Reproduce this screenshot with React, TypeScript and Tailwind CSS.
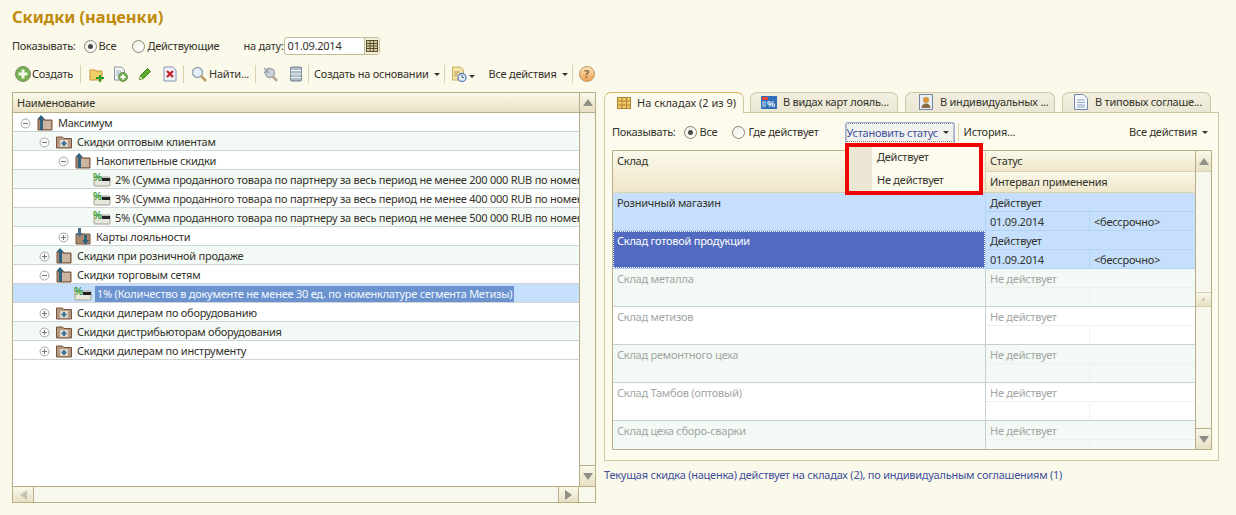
import React from 'react'

const FolderUp = () => (
  <svg width="18" height="18" viewBox="0 0 18 18">
    <path d="M2 5h6l1 1h7v10H2z" fill="#a98a70" stroke="#7a5238" />
    <path d="M4 7h11v8H4z" fill="#c9b5a2" />
    <path d="M5 1 1.5 5H4v11h3V5h1.800z" fill="#2f6480" />
  </svg>
)

const FolderPlus = () => (
  <svg width="18" height="18" viewBox="0 0 18 18">
    <path d="M1.500 4h6l1.500 1.500h7.500V15H1.500z" fill="#b39a84" stroke="#7a5238" />
    <rect x="5" y="7" width="8" height="7" fill="#e2d7cb" />
    <path d="M8 8h2v1.500h1.500v2H10V13H8v-1.500H6.500v-2H8z" fill="#3a6f96" />
  </svg>
)

const FolderDown = () => (
  <svg width="18" height="18" viewBox="0 0 18 18">
    <path d="M2 6h14v10H2z" fill="#a98a70" stroke="#7a5238" />
    <path d="M4 0h3v5h2L5.500 9 2 5h2z" fill="#4d7088" />
    <path d="M10 7h3v5h2l-3.500 5L8 12h2z" fill="#2f6480" />
  </svg>
)

const Percent = () => (
  <svg width="20" height="16" viewBox="0 0 20 16">
    <rect x="1" y="5" width="16" height="9" rx="1" fill="#e6e6dc" stroke="#a0a090" />
    <rect x="9" y="6" width="8" height="3" fill="#222" />
    <text x="0" y="9" fontSize="10" fontWeight="bold" fill="#2c9a2c" fontFamily="Liberation Sans, sans-serif">%</text>
  </svg>
)

const Expander = ({ open }: { open: boolean }) => (
  <svg width="11" height="11" viewBox="0 0 11 11" className="shrink-0">
    <circle cx="5.500" cy="5.500" r="4.500" fill="#fafafa" stroke="#a8a8a8" />
    <path d="M3 5.500h5" stroke="#777" />
    {!open && <path d="M5.500 3v5" stroke="#777" />}
  </svg>
)

const Radio = ({ on }: { on?: boolean }) => (
  <span className="flex h-[13px] w-[13px] shrink-0 items-center justify-center rounded-full border border-[#8a8570] bg-gradient-to-br from-[#f0efe8] to-white">
    {on && <span className="h-[5px] w-[5px] rounded-full bg-[#4a4a4a]" />}
  </span>
)

const Caret = () => <span className="ml-[5px] inline-block h-0 w-0 border-x-[3px] border-t-[3px] border-x-transparent border-t-[#333]" />

const Sep = ({ cls }: { cls: string }) => <span className={`h-[18px] w-px shrink-0 bg-[#d8d2b0] ${cls}`} />

const CalendarIcon = () => (
  <svg width="14" height="14" viewBox="0 0 14 14">
    <rect x="1.500" y="1.500" width="11" height="11" fill="#d8cfa0" stroke="#5a5030" />
    <path d="M1.500 4.500h11M1.500 7h11M1.500 9.500h11M5 1.500v11M8.500 1.500v11" stroke="#5a5030" />
  </svg>
)

const Toolbar = () => (
  <div className="mt-[10px] flex h-[18px] items-center pl-[15px]">
    <svg width="16" height="16" viewBox="0 0 16 16">
      <circle cx="8" cy="8" r="7.500" fill="#74b04c" stroke="#7f8f70" />
      <path d="M6.500 3.500h3v3h3v3h-3v3h-3v-3h-3v-3h3z" fill="#f4f8ee" />
    </svg>
    <span className="ml-[1px]">Создать</span>
    <Sep cls="ml-[7px]" />
    <svg className="ml-[8px]" width="16" height="16" viewBox="0 0 16 16">
      <path d="M1 4h5l1 1h6v9H1z" fill="#f2cf6b" stroke="#c69a36" />
      <path d="M10 9h2v2h3v2h-3v3h-2v-3H7v-2h3z" fill="#2f9a2f" />
    </svg>
    <svg className="ml-[7px]" width="16" height="16" viewBox="0 0 16 16">
      <path d="M2.500 1h7l3 3v10h-10z" fill="#f4f6f8" stroke="#8a97a6" />
      <path d="M4 5h5M4 7h5M4 9h3" stroke="#a0acb8" />
      <circle cx="11" cy="11" r="4.500" fill="#74b04c" stroke="#6f8f60" />
      <path d="M10 8.500h2v1.500h1.500v2H12v1.500h-2V12H8.500v-2H10z" fill="#fff" />
    </svg>
    <svg className="ml-[10px]" width="14" height="14" viewBox="0 0 14 14">
      <path d="M9.500 1.500l3 3-7 7-4 1 1-4z" fill="#5cac30" stroke="#3f7f20" />
      <path d="M1.500 12.500l1-3 2 2z" fill="#f0e8c0" />
    </svg>
    <svg className="ml-[11px]" width="14" height="16" viewBox="0 0 14 16">
      <path d="M1 1h9l3 3v11H1z" fill="#eef2f8" stroke="#8a97b6" />
      <path d="M4 5l6 6M10 5l-6 6" stroke="#c8202a" strokeWidth="2.200" />
    </svg>
    <Sep cls="ml-[6px]" />
    <svg className="ml-[7px]" width="16" height="16" viewBox="0 0 16 16">
      <circle cx="6.500" cy="6.500" r="5" fill="#e4eef8" stroke="#9aa8b6" strokeWidth="1.500" />
      <path d="M10 10l5 5" stroke="#c09a60" strokeWidth="2.500" />
    </svg>
    <span className="ml-[2px]">Найти...</span>
    <Sep cls="ml-[6px]" />
    <svg className="ml-[6px]" width="16" height="16" viewBox="0 0 16 16">
      <circle cx="8" cy="7" r="4.500" fill="#ccd2d8" stroke="#a0a8b0" strokeWidth="1.500" />
      <path d="M11 10.500l4 4.500" stroke="#b0a090" strokeWidth="2.500" />
      <path d="M2 2l5 5M7 2 2 7" stroke="#98a0a8" strokeWidth="1.500" />
    </svg>
    <svg className="ml-[11px]" width="14" height="16" viewBox="0 0 14 16">
      <rect x="1.500" y="1" width="11" height="14" rx="1" fill="#b0bcc8" stroke="#6f7d8c" />
      <path d="M1.500 4.500h11M1.500 8h11M1.500 11.500h11" stroke="#eef2f6" />
    </svg>
    <Sep cls="ml-[5px]" />
    <span className="ml-[5px]">Создать на основании</span>
    <Caret />
    <Sep cls="ml-[4px]" />
    <svg className="ml-[6px]" width="16" height="16" viewBox="0 0 16 16">
      <path d="M1.500 1h8l3 3v10h-11z" fill="#f4e5a8" stroke="#c8ac5c" />
      <path d="M3 6h6M3 8h4M3 10h3" stroke="#b89a50" />
      <circle cx="11" cy="11.500" r="4" fill="#e8f0fa" stroke="#5c84b8" strokeWidth="1.300" />
      <path d="M11 9v2.500h2" stroke="#3a5f90" fill="none" />
    </svg>
    <span className="-ml-[3px]"><Caret /></span>
    <span className="ml-[14px]">Все действия</span>
    <Caret />
    <Sep cls="ml-[4px]" />
    <span className="ml-[6px] flex h-[16px] w-[16px] items-center justify-center rounded-full border border-[#b89a68] bg-gradient-to-b from-[#fde4b8] to-[#efa050] text-[11px] font-bold text-[#8a6a40]">?</span>
  </div>
)

const treeRows = [
  { pad: 'pl-[7px]', icon: <FolderUp />, exp: 'open', text: 'Максимум' },
  { pad: 'pl-[26px]', icon: <FolderPlus />, exp: 'open', text: 'Скидки оптовым клиентам' },
  { pad: 'pl-[45px]', icon: <FolderUp />, exp: 'open', text: 'Накопительные скидки' },
  { pad: 'pl-[80px]', icon: <Percent />, text: '2% (Сумма проданного товара по партнеру за весь период не менее 200 000 RUB по номенклатуре сегмента Инструмент)' },
  { pad: 'pl-[80px]', icon: <Percent />, text: '3% (Сумма проданного товара по партнеру за весь период не менее 400 000 RUB по номенклатуре сегмента Инструмент)' },
  { pad: 'pl-[80px]', icon: <Percent />, text: '5% (Сумма проданного товара по партнеру за весь период не менее 500 000 RUB по номенклатуре сегмента Инструмент)' },
  { pad: 'pl-[45px]', icon: <FolderDown />, exp: 'closed', text: 'Карты лояльности' },
  { pad: 'pl-[26px]', icon: <FolderUp />, exp: 'closed', text: 'Скидки при розничной продаже' },
  { pad: 'pl-[26px]', icon: <FolderUp />, exp: 'open', text: 'Скидки торговым сетям' },
  { pad: 'pl-[61px]', icon: <Percent />, text: '1% (Количество в документе не менее 30 ед. по номенклатуре сегмента Метизы)', selected: true },
  { pad: 'pl-[26px]', icon: <FolderPlus />, exp: 'closed', text: 'Скидки дилерам по оборудованию' },
  { pad: 'pl-[26px]', icon: <FolderPlus />, exp: 'closed', text: 'Скидки дистрибьюторам оборудования' },
  { pad: 'pl-[26px]', icon: <FolderPlus />, exp: 'closed', text: 'Скидки дилерам по инструменту' },
]

const ScrollBtn = ({ dir, cls }: { dir: 'up' | 'down' | 'right' | 'left'; cls: string }) => (
  <div className={`flex shrink-0 items-center justify-center bg-gradient-to-b from-[#fbf8ea] to-[#e6e0c4] ${cls}`}>
    {dir === 'up' && <span className="h-0 w-0 border-x-[5px] border-b-[7px] border-x-transparent border-b-[#8f8f88]" />}
    {dir === 'down' && <span className="h-0 w-0 border-x-[5px] border-t-[7px] border-x-transparent border-t-[#8f8f88]" />}
    {dir === 'right' && <span className="h-0 w-0 border-y-[5px] border-l-[7px] border-y-transparent border-l-[#8f8f88]" />}
    {dir === 'left' && <span className="h-0 w-0 border-y-[5px] border-r-[7px] border-y-transparent border-r-[#c4c2b4]" />}
  </div>
)

const TreePanel = () => (
  <div className="flex h-[411px] w-[584px] shrink-0 flex-col border border-[#b8ae85] bg-white">
    <div className="flex min-h-0 flex-1">
      <div className="flex min-w-0 flex-1 flex-col">
        <div className="flex h-[20px] shrink-0 items-center border-b border-[#b8ae85] bg-gradient-to-b from-[#fbf8ea] to-[#e9e2c4] pl-[4px]">Наименование</div>
        {treeRows.map((row, i) => (
          <div
            key={row.text}
            className={`flex h-[19px] shrink-0 items-center overflow-hidden whitespace-nowrap border-b border-[#cdd5d5] pt-[2px] ${row.pad} ${
              row.selected ? 'bg-[#c5dffc]' : i % 2 === 1 ? 'bg-[#f3f9f4]' : 'bg-white'
            }`}
          >
            {row.exp && <Expander open={row.exp === 'open'} />}
            {row.exp && <span className="ml-[5px] shrink-0">{row.icon}</span>}
            {!row.exp && <span className="shrink-0">{row.icon}</span>}
            <span className={row.selected ? 'ml-[1px] bg-[#6b93cf] px-[2px] leading-[16px] text-[#f4f8ff]' : row.exp ? 'ml-[4px]' : 'ml-[1px] pl-[1px]'}>{row.text}</span>
          </div>
        ))}
      </div>
      <div className="flex w-[16px] shrink-0 flex-col border-l border-[#b8ae85] bg-[#f8f7ee]">
        <ScrollBtn dir="up" cls="h-[20px] border-b border-[#b8ae85]" />
        <div className="flex-1" />
        <ScrollBtn dir="down" cls="h-[21px] border-t border-[#b8ae85]" />
      </div>
    </div>
    <div className="flex h-[16px] shrink-0 border-t border-[#b8ae85] bg-[#f8f7ee]">
      <ScrollBtn dir="left" cls="w-[21px] border-r border-[#b8ae85]" />
      <div className="flex-1" />
      <ScrollBtn dir="right" cls="w-[21px] border-x border-[#b8ae85]" />
      <div className="w-[16px]" />
    </div>
  </div>
)

const tabs = [
  { label: 'На складах (2 из 9)', w: 'w-[140px]', active: true, pl: 'pl-[12px]', gap: 'ml-[6px] tracking-normal', icon: (
    <svg width="14" height="12" viewBox="0 0 14 12">
      <rect x="0.500" y="0.500" width="13" height="11" fill="#eec86a" stroke="#b0842c" />
      <path d="M.5 4h13M.5 8h13M5 .5v11M9.500.5v11" stroke="#b0842c" />
    </svg>
  ) },
  { label: 'В видах карт лояль...', w: 'w-[148px]', ml: 'ml-[6px]', pl: 'pl-[10px]', gap: 'ml-[6px]', icon: (
    <svg width="16" height="13" viewBox="0 0 16 13">
      <rect width="16" height="13" fill="#2f6fb8" />
      <rect x="1" y="1" width="6" height="3" fill="#e04838" />
      <text x="6" y="11" fontSize="9" fontWeight="bold" fill="#fff" fontFamily="Liberation Sans, sans-serif">%</text>
      <path d="M1 6h4M1 8h4M1 10h4" stroke="#dce8f6" />
    </svg>
  ) },
  { label: 'В индивидуальных ...', w: 'w-[150px]', ml: 'ml-[7px]', pl: 'pl-[13px]', gap: 'ml-[7px]', icon: (
    <svg width="14" height="16" viewBox="0 0 14 16">
      <rect x="0.500" y="0.500" width="13" height="15" fill="#e8ecf4" stroke="#7a88a8" />
      <circle cx="7" cy="6" r="3" fill="#d8963c" />
      <path d="M2.500 14c0-6 9-6 9 0z" fill="#8a6a44" />
    </svg>
  ) },
  { label: 'В типовых соглаше...', w: 'w-[149px]', ml: 'ml-[7px]', pl: 'pl-[11px]', gap: 'ml-[7px]', icon: (
    <svg width="14" height="16" viewBox="0 0 14 16">
      <path d="M.5.500h9l4 4v11H.5z" fill="#f4f7fc" stroke="#6f86ae" />
      <path d="M3 6h8M3 8.500h8M3 11h8M3 13h8" stroke="#8fa4c8" />
    </svg>
  ) },
]

const Tabs = () => (
  <div className="flex h-[20px] items-stretch">
    {tabs.map((t) => (
      <div
        key={t.label}
        className={`flex items-center whitespace-nowrap rounded-t-[7px] border border-[#cfc8a4] pb-[1px] ${t.w} ${t.ml ?? ''} ${t.pl} ${
          t.active ? 'relative z-10 h-[21px] border-b-0 border-t-[#e0b060] bg-[#fdfbee]' : 'border-b-0 bg-gradient-to-b from-[#f2efe0] to-[#ebe7d4]'
        }`}
      >
        {t.icon}
        <span className={t.gap}>{t.label}</span>
      </div>
    ))}
  </div>
)

const stockRows = [
  { name: 'Розничный магазин', status: 'Действует', from: '01.09.2014', to: '<бессрочно>', kind: 'on' },
  { name: 'Склад готовой продукции', status: 'Действует', from: '01.09.2014', to: '<бессрочно>', kind: 'current' },
  { name: 'Склад металла', status: 'Не действует', kind: 'off' },
  { name: 'Склад метизов', status: 'Не действует', kind: 'off' },
  { name: 'Склад ремонтного цеха', status: 'Не действует', kind: 'off' },
  { name: 'Склад Тамбов (оптовый)', status: 'Не действует', kind: 'off' },
  { name: 'Склад цеха сборо-сварки', status: 'Не действует', kind: 'off' },
]

const StockTable = () => (
  <div className="mx-[7px] mt-[7px] flex h-[300px] w-[600px] overflow-hidden border border-[#b8ae85] bg-white">
    <div className="min-w-0 flex-1">
      <div className="flex h-[42px] border-b border-[#d8d2b0]">
        <div className="w-[372px] shrink-0 bg-gradient-to-b from-[#fbf8ea] to-[#efe7ca] pl-[4px] pt-[3px]">Склад</div>
        <div className="flex-1 border-l border-[#d8d2b0]">
          <div className="flex h-[21px] items-center border-b border-[#d8d2b0] bg-gradient-to-b from-[#fbf8ea] to-[#efe7ca] pl-[4px]">Статус</div>
          <div className="flex h-[20px] items-center bg-gradient-to-b from-[#fbf8ea] to-[#efe7ca] pl-[4px]">Интервал применения</div>
        </div>
      </div>
      {stockRows.map((r, i) => {
        const rowBg = r.kind === 'off' ? (i % 2 === 0 ? 'bg-[#f3f9f4]' : 'bg-white') : 'bg-[#c5dffc]'
        const line = r.kind === 'off' ? 'border-[#eef1ee]' : 'border-[#b4d2f2]'
        return (
          <div key={r.name} className={`flex h-[38px] shrink-0 border-b ${r.kind === 'off' ? 'border-[#c8d0d4] text-[#a2a6a4]' : 'border-[#b4d2f2]'} ${rowBg}`}>
            <div
              className={`w-[372px] shrink-0 pl-[4px] pt-[3px] ${
                r.kind === 'current' ? 'bg-[#526bc0] text-white outline-1 -outline-offset-1 outline-dotted outline-white' : ''
              }`}
            >
              {r.name}
            </div>
            <div className={`flex-1 border-l ${r.kind === 'off' ? 'border-[#c8d0d4]' : 'border-[#b4d2f2]'}`}>
              <div className={`flex h-[19px] items-center border-b pl-[4px] pt-[2px] ${line}`}>{r.status}</div>
              <div className="flex h-[18px] pt-[1px]">
                <div className={`flex w-[104px] items-center border-r pl-[4px] ${line}`}>{r.from}</div>
                <div className="flex items-center pl-[4px]">{r.to}</div>
              </div>
            </div>
          </div>
        )
      })}
    </div>
    <div className="flex w-[16px] shrink-0 flex-col border-l border-[#b8ae85] bg-[#f8f7ee]">
      <ScrollBtn dir="up" cls="h-[21px] border-b border-[#d8d2b0]" />
      <div className="h-[120px]" />
      <div className="flex h-[15px] items-center justify-center border-y border-[#d8d2b0] bg-gradient-to-b from-[#fbf8ea] to-[#e6e0c4]">
        <span className="h-[3px] w-[3px] rounded-full bg-[#c8c6b4]" />
      </div>
      <div className="flex-1" />
      <ScrollBtn dir="down" cls="h-[21px] border-t border-[#b8ae85]" />
    </div>
  </div>
)

const RightPanel = () => (
  <div className="ml-[8px] w-[615px] shrink-0">
    <Tabs />
    <div className="h-[349px] border border-[#cfc8a4] bg-[#fdfbee]">
      <div className="relative flex h-[30px] items-center pl-[7px] pt-[8px]">
        <span>Показывать:</span>
        <span className="ml-[8px]"><Radio on /></span>
        <span className="ml-[3px]">Все</span>
        <span className="ml-[15px]"><Radio /></span>
        <span className="ml-[3px]">Где действует</span>
        <span className="ml-[26px] flex h-[21px] w-[110px] items-center rounded-t-[3px] border border-b-0 border-[#9cb4e0] bg-[#f2f2ee] pl-[1px] text-[#3f4f9c] outline-1 -outline-offset-2 outline-dotted outline-[#8a8a8a]">
          Установить статус
          <Caret />
        </span>
        <Sep cls="ml-[3px]" />
        <span className="ml-[5px]">История...</span>
        <span className="ml-auto mr-[10px] flex items-center">
          Все действия
          <Caret />
        </span>
        <div className="absolute left-[240px] top-[30px] z-20 flex h-[52px] w-[138px] border-[4px] border-[#f00000] bg-[#fdfbee]">
          <div className="w-[23px] shrink-0 bg-[#ebe7d4]" />
          <div className="flex flex-col pl-[5px]">
            <span className="flex h-[19px] items-center">Действует</span>
            <span className="mt-[4px] flex h-[19px] items-center">Не действует</span>
          </div>
        </div>
      </div>
      <StockTable />
    </div>
    <div className="mt-[7px] text-[#3f4f9c]">Текущая скидка (наценка) действует на складах (2), по индивидуальным соглашениям (1)</div>
  </div>
)

export default function App() {
  return (
    <div className="h-[515px] w-[1236px] overflow-hidden bg-[#fbf9ea] font-['Noto_Sans',sans-serif] text-[11px] leading-[14px] tracking-[-0.24px] text-[#33322a]">
      <div className="pl-[12px] pt-[7px] text-[16.400px] font-bold leading-[20px] tracking-normal text-[#c08a0c]">Скидки (наценки)</div>
      <div className="mt-[10px] flex h-[18px] items-center pl-[12px]">
        <span>Показывать:</span>
        <span className="ml-[8px]"><Radio on /></span>
        <span className="ml-[2px]">Все</span>
        <span className="ml-[16px]"><Radio /></span>
        <span className="ml-[2px]">Действующие</span>
        <span className="ml-[24px]">на дату:</span>
        <span className="flex h-[18px] w-[96px] items-center rounded-[3px] border border-[#c4bc94] bg-white pl-[3px]">
          <span className="flex-1">01.09.2014</span>
          <span className="flex h-full w-[15px] items-center justify-center border-l border-[#c4bc94] bg-[#f3efdc]"><CalendarIcon /></span>
        </span>
      </div>
      <Toolbar />
      <div className="mt-[9px] flex items-start pl-[12px]">
        <TreePanel />
        <RightPanel />
      </div>
    </div>
  )
}
